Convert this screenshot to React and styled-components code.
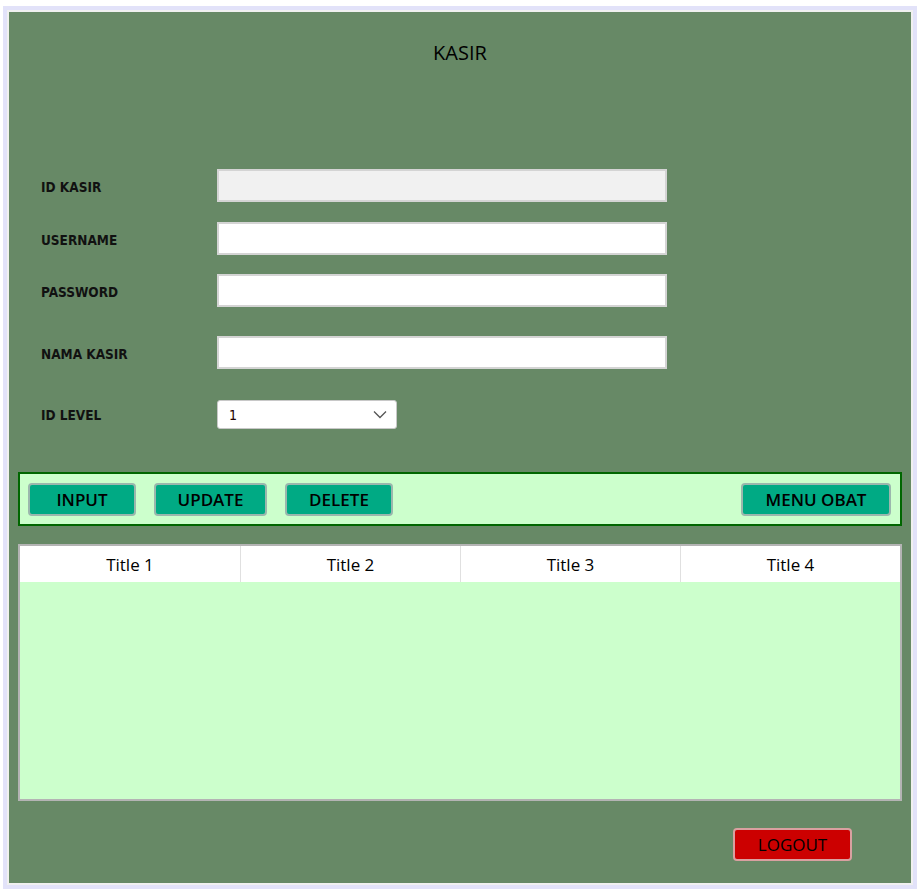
import React from 'react';
import styled, { createGlobalStyle } from 'styled-components';

const GlobalStyle = createGlobalStyle`
  html, body {
    margin: 0;
    padding: 0;
    background: #ffffff;
  }
  body {
    font-family: "Open Sans", "Liberation Sans", sans-serif;
  }
`;

const Frame = styled.div`
  box-sizing: border-box;
  width: 914px;
  margin: 6px 0 0 3px;
  border: 4px solid #e2e2f9;
`;

const Panel = styled.div`
  box-sizing: border-box;
  border: 2px solid #f0f0f0;
  background: #678966;
  height: 875px;
  display: flex;
  flex-direction: column;
  padding: 0 9px;
`;

const Title = styled.h1`
  margin: 0;
  padding-top: 29px;
  text-align: center;
  font-size: 20px;
  font-weight: 500;
  color: #000;
  line-height: 24px;
`;

const Form = styled.div`
  display: flex;
  flex-direction: column;
  padding-left: 23px;
  margin-top: 104px;
`;

const Row = styled.div`
  display: flex;
  align-items: center;
  margin-top: ${p => p.$mt || 0}px;
`;

const Label = styled.label`
  width: 176px;
  padding-top: ${p => (p.$flush ? 0 : 3)}px;
  font-family: "DejaVu Sans Condensed", "DejaVu Sans", sans-serif;
  font-stretch: condensed;
  font-weight: 700;
  font-size: 13.5px;
  color: #111;
`;

const Field = styled.input`
  box-sizing: border-box;
  width: 450px;
  height: 33px;
  margin: 0;
  border: 2px solid #d4d4d4;
  background: ${p => (p.disabled ? '#f1f1f1' : '#ffffff')};
  outline: none;
`;

const SelectBox = styled.div`
  box-sizing: border-box;
  width: 180px;
  height: 29px;
  border: 1px solid #c8c8c8;
  border-radius: 3px;
  background: #fff;
  display: flex;
  align-items: center;
  justify-content: space-between;
  padding: 0 9px 0 11px;
  font-family: "DejaVu Sans Condensed", "DejaVu Sans", sans-serif;
  font-size: 14px;
  color: #200;
`;

const Bar = styled.div`
  box-sizing: border-box;
  margin-top: 43px;
  height: 54px;
  background: #ccffcc;
  border: 2px solid #006600;
  display: flex;
  align-items: center;
  gap: 18px;
  padding: 0 9px 0 8px;
`;

const Button = styled.button`
  box-sizing: border-box;
  height: 33px;
  width: ${p => p.$w}px;
  margin-left: ${p => (p.$push ? 'auto' : '0')};
  background: ${p => (p.$danger ? '#cc0000' : '#00aa84')};
  border: 2px solid ${p => (p.$danger ? '#d9a0a0' : '#9bb7ad')};
  border-radius: 4px;
  font-family: "Open Sans", sans-serif;
  font-weight: ${p => (p.$danger ? 500 : 600)};
  font-size: 17px;
  color: #000;
  padding: 0;
  cursor: pointer;
`;

const Table = styled.div`
  box-sizing: border-box;
  margin-top: 18px;
  height: 257px;
  border: 2px solid #b4b4b4;
  background: #ccffcc;
  display: flex;
  flex-direction: column;
`;

const HeadRow = styled.div`
  display: grid;
  grid-template-columns: repeat(4, 1fr);
  height: 36px;
  background: #ffffff;
`;

const HeadCell = styled.div`
  display: flex;
  align-items: center;
  justify-content: center;
  font-size: 17px;
  color: #000;
  border-left: ${p => (p.$first ? 'none' : '1px solid #e0e0e0')};
`;

const Footer = styled.div`
  display: flex;
  justify-content: flex-end;
  padding-right: 50px;
  margin-top: 27px;
`;

const Chevron = () => (
  <svg width="14" height="9" viewBox="0 0 14 9" fill="none">
    <path d="M1 1.5 L7 7.5 L13 1.5" stroke="#555" strokeWidth="1.3" />
  </svg>
);

const App = () => {
  return (
    <>
      <GlobalStyle />
      <Frame>
        <Panel>
          <Title>KASIR</Title>

          <Form>
            <Row>
              <Label>ID KASIR</Label>
              <Field disabled />
            </Row>
            <Row $mt={20}>
              <Label>USERNAME</Label>
              <Field />
            </Row>
            <Row $mt={19}>
              <Label>PASSWORD</Label>
              <Field type="password" />
            </Row>
            <Row $mt={29}>
              <Label>NAMA KASIR</Label>
              <Field />
            </Row>
            <Row $mt={31}>
              <Label $flush>ID LEVEL</Label>
              <SelectBox>
                <span>1</span>
                <Chevron />
              </SelectBox>
            </Row>
          </Form>

          <Bar>
            <Button $w={108}>INPUT</Button>
            <Button $w={113}>UPDATE</Button>
            <Button $w={108}>DELETE</Button>
            <Button $w={150} $push>MENU OBAT</Button>
          </Bar>

          <Table>
            <HeadRow>
              <HeadCell $first>Title 1</HeadCell>
              <HeadCell>Title 2</HeadCell>
              <HeadCell>Title 3</HeadCell>
              <HeadCell>Title 4</HeadCell>
            </HeadRow>
          </Table>

          <Footer>
            <Button $w={119} $danger>LOGOUT</Button>
          </Footer>
        </Panel>
      </Frame>
    </>
  );
};

export default App;
